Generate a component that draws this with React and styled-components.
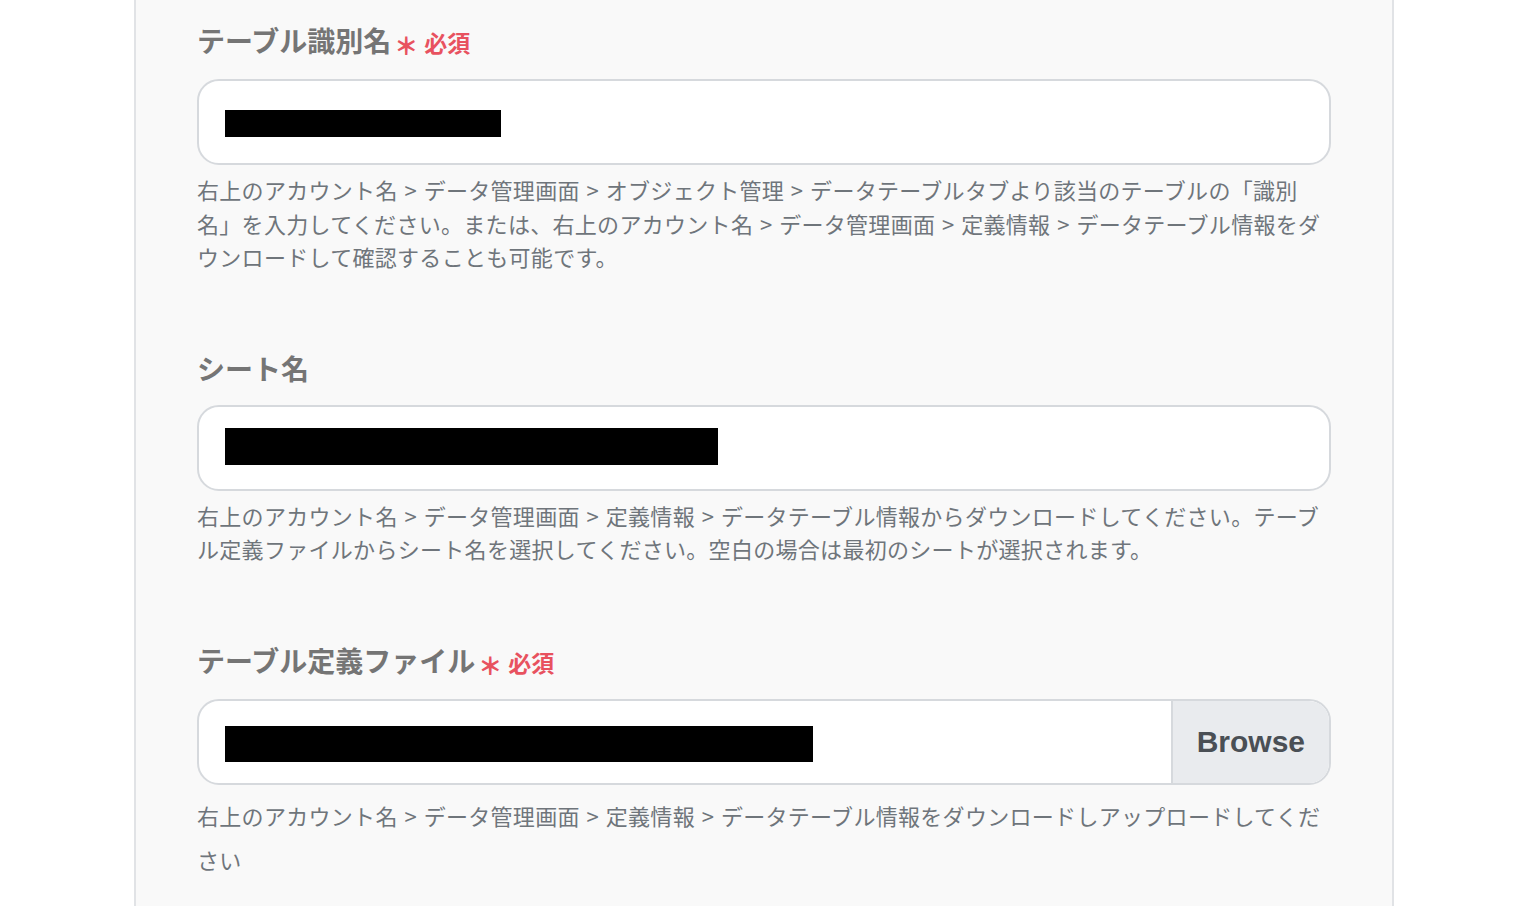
import React from "react";
import styled, { createGlobalStyle } from "styled-components";

const GlobalStyle = createGlobalStyle`
  html, body {
    margin: 0;
    padding: 0;
    background: #ffffff;
  }
  body {
    font-family: "Noto Sans CJK JP", "Noto Sans", sans-serif;
  }
`;

const Page = styled.div`
  min-height: 906px;
  padding-left: 134px;
  display: flex;
`;

const Panel = styled.div`
  width: 1260px;
  box-sizing: border-box;
  background: #f9f9f9;
  border-left: 2px solid #e1e3e6;
  border-right: 2px solid #e1e3e6;
  padding: 21px 61px 40px 61px;
  display: flex;
  flex-direction: column;
  gap: 75px;
`;

const Field = styled.div`
  display: flex;
  flex-direction: column;
`;

const Label = styled.div`
  font-size: 28px;
  font-weight: 700;
  line-height: 39px;
  color: #757575;
  margin-bottom: 17px;
  display: flex;
  align-items: baseline;
`;

const Required = styled.span`
  color: #e8525f;
  font-size: 23px;
  margin-left: 3px;
  display: inline-flex;
  align-items: baseline;
  gap: 6px;

  &::before {
    content: "＊";
    font-size: 24px;
    font-weight: 900;
    position: relative;
    top: 3px;
  }
`;

const InputBox = styled.div`
  height: 86px;
  box-sizing: border-box;
  background: #ffffff;
  border: 2px solid #d6d9dd;
  border-radius: 22px;
  display: flex;
  align-items: stretch;
  overflow: hidden;
`;

const InputValue = styled.div`
  flex: 1;
  display: flex;
  align-items: center;
  padding-left: 26px;
`;

const Redacted = styled.span`
  display: block;
  background: #000000;
  width: ${(p) => p.w}px;
  height: ${(p) => p.h}px;
  margin-top: ${(p) => p.dy || 0}px;
`;

const BrowseButton = styled.div`
  display: flex;
  align-items: center;
  padding: 0 24px 0 24px;
  background: #e9ebee;
  border-left: 2px solid #d6d9dd;
  font-family: "Liberation Sans", Arial, sans-serif;
  font-weight: 700;
  font-size: 30px;
  color: #4a4f55;
`;

const Help = styled.p`
  margin: 8px 0 0 0;
  font-size: 22px;
  line-height: ${(p) => p.lh || 33.5}px;
  word-spacing: 1.5px;
  letter-spacing: 0.3px;
  color: #6f757b;
`;

const fields = [
  {
    label: "テーブル識別名",
    required: true,
    block: { w: 276, h: 27, dy: 2 },
    help:
      "右上のアカウント名 > データ管理画面 > オブジェクト管理 > データテーブルタブより該当のテーブルの「識別名」を入力してください。または、右上のアカウント名 > データ管理画面 > 定義情報 > データテーブル情報をダウンロードして確認することも可能です。",
  },
  {
    label: "シート名",
    block: { w: 493, h: 37, dy: -2 },
    help:
      "右上のアカウント名 > データ管理画面 > 定義情報 > データテーブル情報からダウンロードしてください。テーブル定義ファイルからシート名を選択してください。空白の場合は最初のシートが選択されます。",
  },
  {
    label: "テーブル定義ファイル",
    required: true,
    file: true,
    block: { w: 588, h: 36, dy: 4 },
    lh: 44,
    help:
      "右上のアカウント名 > データ管理画面 > 定義情報 > データテーブル情報をダウンロードしアップロードしてください",
  },
];

const App = () => {
  return (
    <>
      <GlobalStyle />
      <Page>
        <Panel>
          {fields.map((f) => (
            <Field key={f.label}>
              <Label>
                {f.label}
                {f.required && <Required>必須</Required>}
              </Label>
              <InputBox>
                <InputValue>
                  <Redacted w={f.block.w} h={f.block.h} dy={f.block.dy} />
                </InputValue>
                {f.file && <BrowseButton>Browse</BrowseButton>}
              </InputBox>
              <Help lh={f.lh}>{f.help}</Help>
            </Field>
          ))}
        </Panel>
      </Page>
    </>
  );
};

export default App;
